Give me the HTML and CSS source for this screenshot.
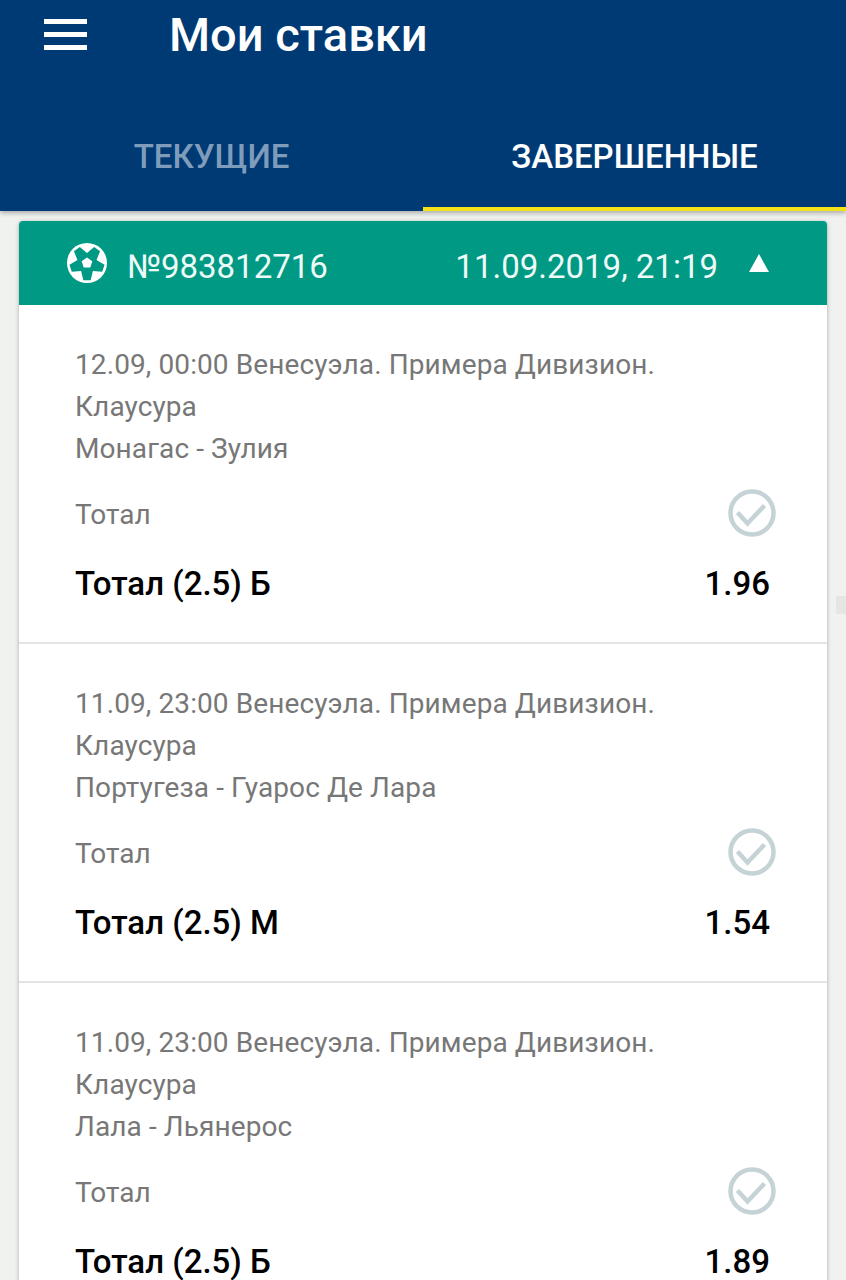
FILE: index.html
```html
<!DOCTYPE html>
<html lang="ru">
<head>
    <meta charset="UTF-8">
    <meta name="viewport" content="width=device-width, initial-scale=1.0">
    <title>Мои ставки</title>
    <link rel="stylesheet" href="styles.css">
</head>
<body>
    <header class="app-header">
        <div class="toolbar">
            <div class="menu-btn"><span></span><span></span><span></span></div>
            <h1>Мои ставки</h1>
        </div>
        <nav class="tabs">
            <div class="tab">ТЕКУЩИЕ</div>
            <div class="tab tab-active">ЗАВЕРШЕННЫЕ</div>
        </nav>
    </header>

    <div class="scroll-mark"></div>

    <section class="bet-card">
        <div class="bet-head">
            <svg class="ball" viewBox="0 0 24 24">
                <circle cx="12" cy="12" r="10" fill="#fff"/>
                <path fill="#009984" d="M12 7L15.58 3.96 18.54 6.11 16.76 10.45 20.76 12.92 19.62 16.4 14.94 16.05 13.83 20.61 10.17 20.61 9.06 16.05 4.38 16.4 3.24 12.92 7.24 10.45 5.46 6.11 8.42 3.96z"/>
                <path fill="#fff" d="M12 9.2l2.66 1.93-1.01 3.14h-3.3l-1.01-3.14z"/>
            </svg>
            <span class="bet-num">№983812716</span>
            <span class="bet-date">11.09.2019, 21:19</span>
            <span class="arrow"></span>
        </div>

        <article class="bet-row">
            <p class="match">12.09, 00:00 Венесуэла. Примера Дивизион.<br>Клаусура<br>Монагас - Зулия</p>
            <div class="line-type">
                <span>Тотал</span>
                <svg class="check" viewBox="0 0 48 48"><circle cx="24" cy="24" r="21.5"/><path d="M9.5 23.5l10 11 17-18"/></svg>
            </div>
            <div class="line-result"><span>Тотал (2.5) Б</span><span class="odds">1.96</span></div>
        </article>

        <article class="bet-row">
            <p class="match">11.09, 23:00 Венесуэла. Примера Дивизион.<br>Клаусура<br>Португеза - Гуарос Де Лара</p>
            <div class="line-type">
                <span>Тотал</span>
                <svg class="check" viewBox="0 0 48 48"><circle cx="24" cy="24" r="21.5"/><path d="M9.5 23.5l10 11 17-18"/></svg>
            </div>
            <div class="line-result"><span>Тотал (2.5) М</span><span class="odds">1.54</span></div>
        </article>

        <article class="bet-row">
            <p class="match">11.09, 23:00 Венесуэла. Примера Дивизион.<br>Клаусура<br>Лала - Льянерос</p>
            <div class="line-type">
                <span>Тотал</span>
                <svg class="check" viewBox="0 0 48 48"><circle cx="24" cy="24" r="21.5"/><path d="M9.5 23.5l10 11 17-18"/></svg>
            </div>
            <div class="line-result"><span>Тотал (2.5) Б</span><span class="odds">1.89</span></div>
        </article>
    </section>
</body>
</html>
```

FILE: styles.css
```css
html, body {
    height: 1280px;
    overflow: hidden;
}

body {
    margin: 0;
    background-color: #f0f2f0;
    font-family: Roboto, "Noto Sans", sans-serif;
    position: relative;
}

.app-header {
    height: 211px;
    background-color: #003a75;
    box-shadow: 0 2px 5px rgba(0, 0, 0, 0.3);
    display: flex;
    flex-direction: column;
}

.toolbar {
    height: 129px;
    display: flex;
    align-items: flex-start;
}

.menu-btn {
    width: 43px;
    margin: 19px 0 0 44px;
    display: flex;
    flex-direction: column;
    gap: 8px;
}

.menu-btn span {
    height: 5px;
    background-color: #fff;
}

h1 {
    margin: 8px 0 0 82px;
    font-size: 47px;
    line-height: 54px;
    font-weight: 500;
    color: #fff;
}

.tabs {
    flex: 1;
    display: flex;
}

.tab {
    flex: 1;
    text-align: center;
    font-size: 33px;
    line-height: 56px;
    font-weight: 500;
    color: #7f9cba;
}

.tab-active {
    color: #fff;
    border-bottom: 4px solid #f5e31a;
}

.scroll-mark {
    position: absolute;
    right: 0;
    top: 596px;
    width: 10px;
    height: 18px;
    background-color: #e4e6e4;
}

.bet-card {
    margin: 10px 19px 0;
    background-color: #fff;
    border-radius: 4px 4px 0 0;
    box-shadow: 0 1px 4px rgba(0, 0, 0, 0.3);
}

.bet-head {
    height: 84px;
    background-color: #009984;
    border-radius: 4px 4px 0 0;
    display: flex;
    align-items: center;
    color: #eefaf7;
    font-size: 33px;
}

.ball {
    width: 48px;
    height: 48px;
    margin-left: 44px;
}

.bet-num {
    margin: 6px 0 0 16px;
}

.bet-date {
    margin: 6px 0 0 auto;
}

.arrow {
    width: 0;
    height: 0;
    margin: 0 58px 0 31px;
    border-left: 10px solid transparent;
    border-right: 10px solid transparent;
    border-bottom: 18px solid #fff;
}

.bet-row {
    height: 339px;
    padding: 39px 52px 0 56px;
    box-sizing: border-box;
    border-bottom: 2px solid #e3e5e5;
}

.match {
    margin: 0;
    font-size: 28px;
    line-height: 42px;
    letter-spacing: 0.1px;
    color: #777;
}

.line-type {
    margin-top: 20px;
    height: 48px;
    display: flex;
    justify-content: space-between;
    align-items: center;
    font-size: 28px;
    color: #777;
}

.check {
    width: 48px;
    height: 48px;
    margin: -2px -1px 0 0;
    fill: none;
    stroke: #c5d2d6;
    stroke-width: 4.5;
}

.line-result {
    margin-top: 26px;
    display: flex;
    justify-content: space-between;
    padding-right: 5px;
    font-size: 33px;
    line-height: 40px;
    font-weight: 500;
    color: #000;
}
```
